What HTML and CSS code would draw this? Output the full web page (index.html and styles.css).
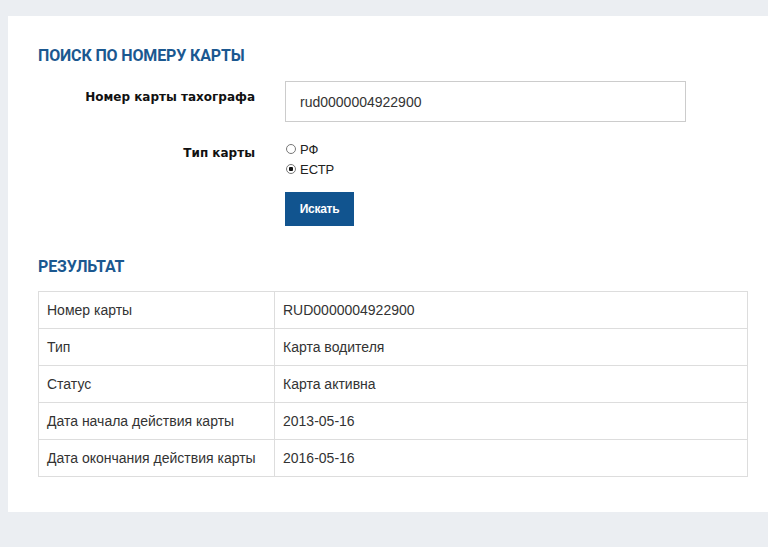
FILE: index.html
```html
<!DOCTYPE html>
<html lang="ru">
<head>
    <meta charset="UTF-8">
    <meta name="viewport" content="width=device-width, initial-scale=1.0">
    <title>Поиск по номеру карты</title>
    <link rel="stylesheet" href="styles.css">
</head>
<body>

    <div class="content">
        <h2>Поиск по номеру карты</h2>
        <form class="search-form" onsubmit="return false">
            <div class="form-row">
                <label for="cardNumber" class="form-label">Номер карты тахографа</label>
                <input type="text" id="cardNumber" class="form-input" value="rud0000004922900">
            </div>
            <div class="form-row">
                <span class="form-label label-type">Тип карты</span>
                <div class="radio-group">
                    <label class="radio"><input type="radio" name="cardType" value="rf"> РФ</label>
                    <label class="radio"><input type="radio" name="cardType" value="estr" checked> ЕСТР</label>
                </div>
            </div>
            <div class="form-row">
                <span class="form-label"></span>
                <button type="submit" class="btn-search">Искать</button>
            </div>
        </form>

        <h2 class="result-title">Результат</h2>
        <table class="result-table">
            <tr><td class="col-name">Номер карты</td><td>RUD0000004922900</td></tr>
            <tr><td class="col-name">Тип</td><td>Карта водителя</td></tr>
            <tr><td class="col-name">Статус</td><td>Карта активна</td></tr>
            <tr><td class="col-name">Дата начала действия карты</td><td>2013-05-16</td></tr>
            <tr><td class="col-name">Дата окончания действия карты</td><td>2016-05-16</td></tr>
        </table>
    </div>

</body>
</html>
```

FILE: styles.css
```css
body {
    margin: 0;
    padding: 16px 0 35px 8px;
    background-color: #ebeef2;
    font-family: 'Liberation Sans', Arial, sans-serif;
    color: #333;
}

.content {
    background-color: #fff;
    padding: 30px 20px 35px 30px;
    min-height: 431px;
}

h2 {
    margin: 0;
    font-family: Roboto, 'Liberation Sans', sans-serif;
    font-size: 16px;
    font-weight: bold;
    letter-spacing: -0.15px;
    text-transform: uppercase;
    color: #1b5890;
    line-height: 20px;
}

.search-form {
    margin-top: 15px;
    display: flex;
    flex-direction: column;
}

.form-row {
    display: flex;
    align-items: flex-start;
}

.form-label {
    width: 217px;
    flex-shrink: 0;
    padding-right: 30px;
    text-align: right;
    font-family: 'DejaVu Sans', sans-serif;
    font-size: 12px;
    font-weight: bold;
    color: #111;
    padding-top: 9px;
}

.label-type {
    padding-top: 24px;
}

.form-input {
    width: 401px;
    height: 41px;
    box-sizing: border-box;
    border: 1px solid #ccc;
    padding: 0 14px;
    font-family: 'Liberation Sans', Arial, sans-serif;
    font-size: 14px;
    color: #333;
    margin: 0;
}

.radio-group {
    display: flex;
    flex-direction: column;
    margin-top: 18px;
    gap: 0;
}

.radio {
    font-size: 13px;
    color: #222;
    line-height: 20px;
    display: flex;
    align-items: center;
    gap: 4px;
}

.radio input {
    appearance: none;
    -webkit-appearance: none;
    margin: 0 0 2px 1px;
    width: 10px;
    height: 10px;
    border: 1px solid #777;
    border-radius: 50%;
    background-color: #fff;
    box-sizing: border-box;
}

.radio input:checked {
    background: radial-gradient(circle, #111 0, #111 2px, #fff 2.5px);
}

.btn-search {
    margin-top: 12px;
    width: 69px;
    height: 34px;
    border: none;
    background-color: #11548f;
    color: #fff;
    font-family: 'Liberation Sans', Arial, sans-serif;
    font-size: 12px;
    font-weight: bold;
    letter-spacing: -0.3px;
    cursor: pointer;
}

.result-title {
    margin-top: 31px;
}

.result-table {
    margin-top: 14px;
    width: 710px;
    border-collapse: collapse;
    font-size: 14px;
}

.result-table td {
    border: 1px solid #ddd;
    height: 36px;
    padding: 0 8px;
    color: #333;
}

.col-name {
    width: 219px;
}
```
